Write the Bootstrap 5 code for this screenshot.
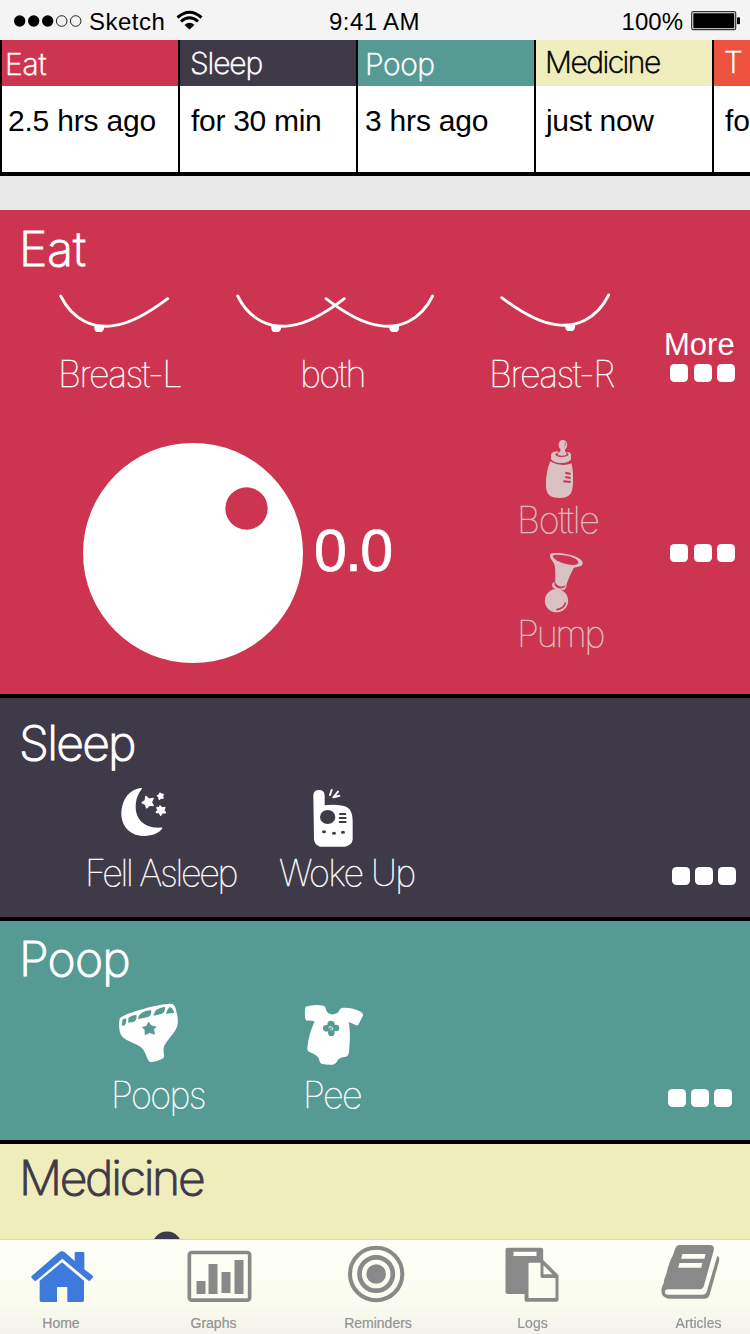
<!DOCTYPE html>
<html lang="en">
<head>
<meta charset="utf-8">
<meta name="viewport" content="width=device-width, initial-scale=1">
<title>Baby tracker</title>
<link rel="stylesheet" href="https://cdn.jsdelivr.net/npm/bootstrap@5.3.0/dist/css/bootstrap.min.css">
<style>
:root{--eat:#cd344f;--sleep:#3f3a48;--poop:#569a94;--med:#efedbc;--teeth:#ec523d}
body{width:750px;height:1334px;overflow:hidden;background:#e9e9e9;font-family:"Liberation Sans",Arial,sans-serif;color:#000}
svg{display:block;flex:none}
.statusbar{height:40px;background:#f4f4f4;font-size:24px;line-height:43px;padding:0 10px 0 14px}
.statusbar svg{margin-top:1px}
.side{width:250px}
.summary{height:136px;background:#fff;border-bottom:4px solid #000;overflow:hidden}
.cell{width:178px;flex:none;border-left:2px solid #000;font-size:30px;white-space:nowrap}
.cell .top{height:46px;line-height:49px;color:#fff;font-family:Inter,"Liberation Sans",sans-serif;font-weight:250;-webkit-text-stroke:.6px currentColor}
.cell .when{line-height:70px}
.strip-gap{height:34px}
.panel{border-bottom:4px solid #000;color:#fff;white-space:nowrap}
.panel h2{font-family:Inter,"Liberation Sans",sans-serif;font-size:48px;line-height:60px;margin:0 0 0 19px;font-weight:250;-webkit-text-stroke:1.1px currentColor}
.tile{flex:none}
.thin{font-family:Inter,"Liberation Sans",sans-serif;font-weight:100;font-size:36px;line-height:41px;height:40px;letter-spacing:-1.6px;text-indent:2px;-webkit-text-stroke:.45px currentColor}
.dots{display:flex;gap:5.5px;margin-left:auto}
.dots i{width:18px;height:18px;border-radius:4.5px;background:#fff}
.bg-eat{background:var(--eat)}.bg-sleep{background:var(--sleep)}.bg-poop{background:var(--poop)}.bg-med{background:var(--med)}.bg-teeth{background:var(--teeth)}
.eat{height:488px;padding-top:9px}
.sleep{height:223px;padding-top:15px}
.poop{height:223px;padding-top:8px}
.med{height:190px;padding-top:4px;color:var(--sleep)}
.more-word{font-size:31px;line-height:36px;text-indent:2px}
.dial{width:220px;height:220px;margin:49px 0 0 83px}
.amount{font-size:59px;line-height:60px;margin:127px 0 0 11px;width:201px;letter-spacing:-1.5px;-webkit-text-stroke:.7px #fff}
.muted{color:#dac1c4}
.tabbar{height:95px;border-top:1px solid #d6d6cb;background:linear-gradient(#fefff7,#fbfcef 65%,#f3f2ed)}
.tabbar a{color:#929292;font-size:14px;line-height:22px;text-decoration:none;display:flex;flex-direction:column;align-items:center;flex:none;-webkit-text-stroke:.2px #929292}
.tabbar svg{color:#898989}
</style>
</head>
<body>
<header class="statusbar d-flex justify-content-between align-items-start">
  <div class="side d-flex">
    <svg width="70" height="40" viewBox="14 0 70 40"><g><circle cx="19.7" cy="20" r="5.7"/><circle cx="33.7" cy="20" r="5.7"/><circle cx="47.7" cy="20" r="5.7"/></g><g fill="none" stroke="#222" stroke-width="1"><circle cx="61.7" cy="20" r="5.3"/><circle cx="75.7" cy="20" r="5.3"/></g></svg>
    <span style="letter-spacing:.5px;margin-left:5px">Sketch</span>
    <svg class="ms-2" width="32" height="40" viewBox="173 1 32 40"><path d="M177.500 17.500Q189.500 7 201.500 17.500M181 21.500Q189.500 14 198 21.500" fill="none" stroke="#000" stroke-width="3"/><path d="M184.500 25Q189.500 20.500 194.500 25L189.500 29.500Z"/></svg>
  </div>
  <div style="letter-spacing:.4px;margin-right:5px">9:41 AM</div>
  <div class="side d-flex justify-content-end">
    <span>100%</span>
    <svg class="ms-2" width="49" height="40" viewBox="691 1 49 40"><rect x="691.700" y="11.700" width="44" height="18" rx="1.500" fill="none" stroke="#333" stroke-width="1.200"/><rect x="693.300" y="13.300" width="41" height="15" rx=".5"/><rect x="737" y="17.300" width="3" height="7" rx="1"/></svg>
  </div>
</header>

<section class="summary d-flex">
  <div class="cell"><div class="top bg-eat" style="letter-spacing:-.2px;padding-left:3px">Eat</div><div class="when" style="padding-left:6px;letter-spacing:-.2px">2.5 hrs ago</div></div>
  <div class="cell"><div class="top bg-sleep" style="letter-spacing:-1.1px;padding-left:10px;line-height:46px">Sleep</div><div class="when" style="padding-left:11px;letter-spacing:-.3px">for 30 min</div></div>
  <div class="cell"><div class="top bg-poop" style="padding-left:7px;letter-spacing:-.4px">Poop</div><div class="when" style="padding-left:7px;letter-spacing:-.2px">3 hrs ago</div></div>
  <div class="cell"><div class="top bg-med text-black" style="letter-spacing:-1.5px;padding-left:9px;line-height:45px">Medicine</div><div class="when" style="padding-left:10px;letter-spacing:-.3px">just now</div></div>
  <div class="cell"><div class="top bg-teeth" style="padding-left:10px;line-height:45px">T</div><div class="when" style="padding-left:11px">fo</div></div>
</section>
<div class="strip-gap"></div>

<section class="panel eat bg-eat">
  <h2 style="letter-spacing:0">Eat</h2>
  <div class="d-flex">
    <div class="tile" style="width:177px;margin-left:56px">
      <svg width="120" height="75" viewBox="168 207 360 225"><path d="M182 258C220 335 285 355 340 347C395 341 450 306 503 266" fill="none" stroke="#fff" stroke-width="8.500" stroke-linecap="round"/><path d="M283 347H312V356Q309 366 301 366H293Q285 366 283 356Z" fill="#fff"/></svg>
      <div class="thin">Breast-L</div>
    </div>
    <div class="tile" style="width:254px">
      <svg width="208" height="75" viewBox="699 207 624 225"><g id="pair"><path d="M713 258C751 335 816 355 871 347C926 341 981 306 1033 266" fill="none" stroke="#fff" stroke-width="8.500" stroke-linecap="round"/><path d="M814 347H843V356Q840 366 832 366H824Q816 366 814 356Z" fill="#fff"/></g><use href="#pair" transform="matrix(-1 0 0 1 2011 0)"/></svg>
      <div class="thin" style="padding-left:65px">both</div>
    </div>
    <div class="tile" style="width:175px">
      <svg style="margin-left:10px" width="120" height="75" viewBox="366 207 360 225"><path d="M701 255C663 332 598 352 543 344C488 338 433 303 380 263" fill="none" stroke="#fff" stroke-width="8.500" stroke-linecap="round"/><path d="M600 344H571V353Q573 363 581 363H589Q597 363 600 353Z" fill="#fff"/></svg>
      <div class="thin">Breast-R</div>
    </div>
    <div class="tile">
      <div class="more-word" style="margin-top:48px">More</div>
      <div class="dots" style="margin:1px 0 0 8px"><i></i><i></i><i></i></div>
    </div>
  </div>
  <div class="d-flex">
    <svg class="dial" viewBox="0 0 220 220"><circle cx="110" cy="110" r="110" fill="#fff"/><circle cx="163.500" cy="65.500" r="21.200" fill="#cd344f"/></svg>
    <div class="amount">0.0</div>
    <div class="tile muted" style="padding-top:42px">
      <svg style="margin-left:25px" width="48" height="64" viewBox="120 48 144 192" fill="currentColor"><path d="M188 60C203 60 205 80 197 86C193 90 195 95 200 98L199 105Q187 110 174 105L173 99C180 96 183 92 181 87C172 80 175 60 188 60Z"/><path d="M175 94Q156 94 153 104V116C158 132 207 134 213 117V102Q210 96 201 95L202 98Q207 100 205 105C196 114 171 112 166 104Q165 99 173 98Z"/><path d="M152 124C145 133 138 165 138 192C137 222 148 234 180 234C209 234 218 221 219 190C220 165 218 140 214 130C197 138 167 136 152 124Z"/><path d="M194 66Q199 72 194 79" stroke="#cd344f" stroke-width="2" fill="none"/><path d="M196 158L212 162M196 171L212 174M190 184L212 186" stroke="#cd344f" stroke-width="6"/></svg>
      <div class="thin" style="letter-spacing:-1.2px">Bottle</div>
      <svg style="margin-left:25px" width="54" height="74" viewBox="120 360 162 222" fill="currentColor"><path fill-rule="evenodd" d="M151 402C160 395 217 402 235 414C246 420 252 428 246 436C240 441 230 441 221 444C213 460 206 475 200 492C193 503 172 501 166 488C165 468 168 451 163 432C155 420 147 410 151 402ZM158 408C161 421 188 431 210 434C224 436 236 434 235 427C233 417 215 409 191 406C174 404 162 403 158 408Z"/><path d="M163 486C153 489 156 500 160 504L173 509H194L199 500Q202 493 198 492L195 501Q182 509 169 502Q162 496 163 486Z"/><circle cx="169.500" cy="542" r="35"/><path d="M171 569Q192 565 196 549" stroke="#cd344f" stroke-width="5" fill="none" stroke-linecap="round"/></svg>
      <div class="thin" style="letter-spacing:-2.2px">Pump</div>
    </div>
    <div class="dots" style="margin:150px 15px 0 auto"><i></i><i></i><i></i></div>
  </div>
</section>

<section class="panel sleep bg-sleep">
  <h2 style="letter-spacing:-1.7px">Sleep</h2>
  <div class="d-flex" style="padding-top:8px">
    <div class="tile" style="margin-left:83px;width:195px">
      <svg style="margin-left:32px" width="60" height="72" viewBox="345 273 180 216" fill="#fff"><path d="M426 296C427 293 420 294 412 296C380 305 364 338 364 372C365 412 393 438 432 438C458 438 480 428 487 415C488 411 480 413 474 413C429 412 407 386 407 351C407 325 416 309 426 296Z"/><g stroke="#fff" stroke-width="5" stroke-linejoin="round"><path d="M438 320L446 328L459 326L453 337L459 346L449 345L440 353L437 343L427 338L436 332Z"/><path d="M480 310L484 314L489 313L487 319L489 324L483 323L478 327L477 321L473 317L478 315Z"/><path d="M480 348L486 354L494 353L491 361L496 368L488 367L482 375L478 367L469 367L475 361L471 353L479 354Z"/></g></svg>
      <div class="thin" style="letter-spacing:-2.3px">Fell Asleep</div>
    </div>
    <div class="tile">
      <svg style="margin-left:27px" width="60" height="72" viewBox="165 33 180 216"><path d="M190 76Q191 60 207 60Q224 60 224 77V106Q250 102 278 107C303 112 308 130 308 155V208Q307 226 285 230H210Q194 226 192 208Z" fill="#fff"/><path d="M245 60L240 75M264 65L250 82L268 77" stroke="#fff" stroke-width="6" fill="none" stroke-linecap="round" stroke-linejoin="round"/><g fill="#3f3a48"><ellipse cx="233" cy="141" rx="23" ry="21"/><ellipse cx="222" cy="185" rx="6" ry="4.500"/><ellipse cx="252" cy="190" rx="6" ry="4.500"/><ellipse cx="279" cy="187" rx="6" ry="4.500"/></g><path d="M270 132H286M269 144H287M269 156H287" stroke="#3f3a48" stroke-width="6" stroke-linecap="round"/></svg>
      <div class="thin" style="text-indent:1px">Woke Up</div>
    </div>
    <div class="dots" style="margin:86px 14px 0 auto;gap:5px"><i></i><i></i><i></i></div>
  </div>
</section>

<section class="panel poop bg-poop">
  <h2 style="letter-spacing:-.8px">Poop</h2>
  <div class="d-flex" style="padding-top:9px">
    <div class="tile" style="margin-left:109px;width:193px">
      <svg style="margin-left:3px" width="72" height="77" viewBox="336 204 216 231"><path d="M360 265C372 249 478 221 513 221Q525 222 528 240C535 265 537 284 525 302C511 324 494 338 491 354C489 366 494 375 491 383Q475 395 450 396Q443 391 440 380C433 361 429 353 410 344C386 333 365 327 360 307C357 295 356 272 360 265Z" fill="#fff"/><g fill="#569a94"><path d="M368 269Q373 265 379 266Q379 284 372 287L366 287Q365 275 368 269Z"/><path d="M385 264Q396 254 409 255Q412 271 401 276L385 278Z"/><path d="M414 264Q418 245 453 240Q456 255 446 260Q430 264 415 267Z"/><path d="M460 257Q462 235 495 230Q497 244 486 251Q475 254 460 257Z"/><path d="M498 251Q503 234 511 231Q522 238 522 249Z"/><path stroke="#569a94" stroke-width="2" stroke-linejoin="round" d="M446 276L453 287L468 290L461 298L464 313L449 308L435 314L435 300L427 292L440 288Z"/></g></svg>
      <div class="thin">Poops</div>
    </div>
    <div class="tile">
      <svg style="margin-left:-2px" width="70" height="77" viewBox="90 54 210 231"><path d="M107 80Q132 72 160 77C171 80 165 97 179 101Q189 106 200 100C209 96 207 83 219 83Q249 82 272 95Q282 101 278 109L265 134Q260 139 252 133L236 126C242 155 239 193 237 216Q235 231 223 231Q211 231 204 239Q197 253 188 254Q169 255 154 251Q148 246 147 236Q142 226 120 217Q111 214 112 205C114 175 123 149 134 124Q121 121 110 122Q103 119 105 88Z" fill="#fff"/><g fill="#569a94"><circle cx="183" cy="133" r="11"/><circle cx="169" cy="145" r="10"/><circle cx="198" cy="144" r="10"/><circle cx="184" cy="158" r="10"/><circle cx="183" cy="145" r="9"/></g><path d="M176 145Q176 139 183 140Q190 142 188 150M183 146V151" stroke="#fff" stroke-width="2.500" fill="none"/></svg>
      <div class="thin" style="text-indent:1px">Pee</div>
    </div>
    <div class="dots" style="margin:91px 18px 0 auto;gap:5px"><i></i><i></i><i></i></div>
  </div>
</section>

<section class="panel med bg-med border-0">
  <h2 style="letter-spacing:-2.3px">Medicine</h2>
  <svg style="margin:23px 0 0 152px" width="30" height="30" viewBox="0 0 30 30"><circle cx="15" cy="15.500" r="15" fill="#3f3a48"/></svg>
</section>

<nav class="tabbar fixed-bottom d-flex">
  <a href="#" style="width:122px"><svg width="72" height="72" viewBox="75 330 216 216"><g fill="#3d7adc"><path d="M186 364Q191 364 196 368L224 393V369Q224 366 227 366H250Q253 366 253 369V418L278 437Q281 440 278 443L271 451Q268 455 264 451L187 386L110 451Q106 455 102 451L95 444Q92 440 96 437L176 368Q181 364 186 364Z"/><path d="M186 397L252 452V511Q252 516 247 516H202V471H171V516H124Q119 516 119 511V452Z"/></g></svg>Home</a>
  <a href="#" style="width:183px"><svg width="80" height="72" viewBox="520.500 330 240 216" fill="currentColor"><rect x="566.500" y="367.500" width="181" height="143" rx="7" fill="none" stroke="currentColor" stroke-width="11"/><path d="M588 453h27v39h-27zM624 402h27v90h-27zM663 426h27v63h-27zM702 390h27v102h-27z"/></svg>Graphs</a>
  <a href="#" style="width:146px"><svg width="80" height="72" viewBox="1014 330 240 216" fill="none" stroke="currentColor"><circle cx="1128.500" cy="432" r="78.500" stroke-width="12"/><circle cx="1128.500" cy="432" r="50" stroke-width="14"/><circle cx="1128.500" cy="432" r="29.500" fill="currentColor" stroke="none"/></svg>Reminders</a>
  <a href="#" style="width:163px"><svg width="80" height="72" viewBox="352.500 330 240 216" fill="currentColor"><path fill-rule="evenodd" d="M396 353H497Q503 353 503 359V390L549 436V509Q549 515 543 515H453Q447 515 447 509V492H396Q390 492 390 486V359Q390 353 396 353ZM414 365V378H483V365ZM459 398V504H540V444H501Q495 444 495 438V398ZM504 406V433H531Z"/></svg>Logs</a>
  <a href="#" style="width:169px"><svg width="80" height="72" viewBox="850.500 330 240 216" fill="currentColor"><path fill-rule="evenodd" d="M911 345H1005Q1017 346 1015 360L985 469Q982 478 973 478H877Q869 479 868 485Q868 494 878 494H982Q990 494 993 487L1022 389Q1024 380 1027 377Q1033 382 1031 392L1003 493Q999 506 988 506H883C865 506 856 494 858 478C859 468 863 464 865 459L866 449L873 430L877 414L885 390L893 374L899 356Q904 345 911 345ZM921 372L917 386H987L990 372ZM912 399L908 413H977L981 399Z"/></svg>Articles</a>
</nav>
<script src="https://cdn.jsdelivr.net/npm/bootstrap@5.3.0/dist/js/bootstrap.bundle.min.js"></script>
</body>
</html>
